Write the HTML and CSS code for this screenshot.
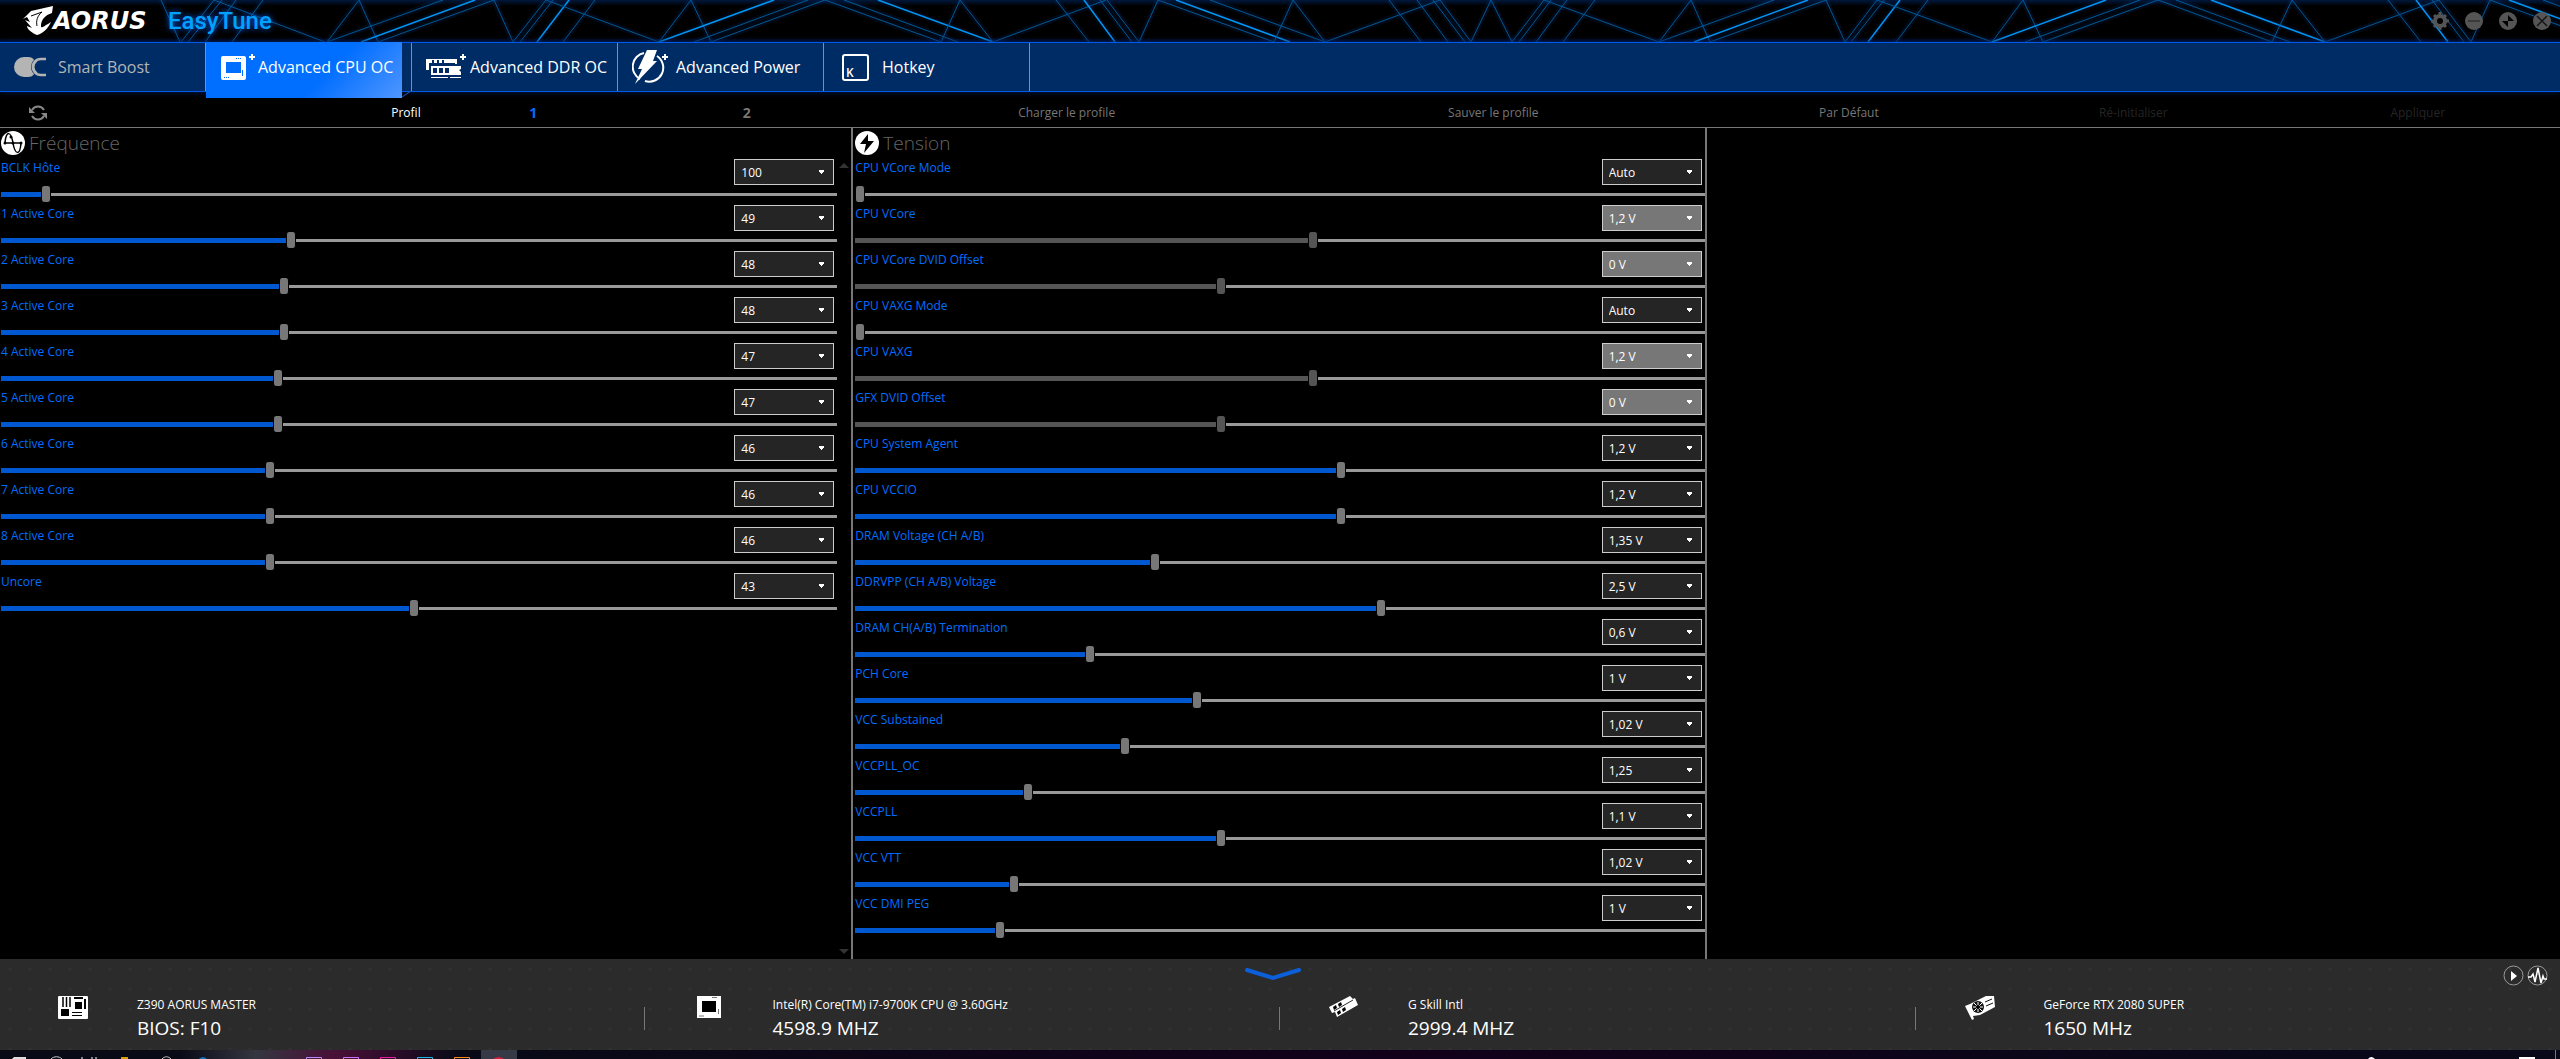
FILE: index.html
```html
<!DOCTYPE html>
<html lang="fr">
<head>
  <meta charset="UTF-8">
  <title>EasyTune</title>
  <link rel="stylesheet" href="styles.css">
</head>
<body>
  <header class="titlebar">
    <svg class="titlebar-lines" id="lines" aria-hidden="true"></svg>
    <div class="brand">
      <svg class="brand-logo" viewBox="0 0 30 30" aria-hidden="true">
        <path d="M0 13 L8 5 L30 0 L29 7 C22 9 18 14 18 20 C18 23 21 20 25 18 L28 16 C25 23 19 28 14 29 C9 27 4 23 4 20 L9 22 L2 14 L7 16 L4 11 Z" fill="#fff"/>
        <path d="M8 10 L19 6 C14 10 13 15 14 20" fill="none" stroke="#000" stroke-width="1"/>
      </svg>
      <span class="brand-name">AORUS</span>
      <h1 class="app-name">EasyTune</h1>
    </div>
    <div class="window-buttons">
      <button aria-label="Paramètres">
        <svg viewBox="0 0 18 18"><circle cx="9" cy="9" r="5" fill="none" stroke="#555" stroke-width="4"/><path d="M9 0v18M0 9h18M3 3l12 12M15 3L3 15" stroke="#555" stroke-width="3"/><circle cx="9" cy="9" r="3" fill="#000"/></svg>
      </button>
      <button aria-label="Réduire">
        <svg viewBox="0 0 18 18"><circle cx="9" cy="9" r="9" fill="#555"/><path d="M3 9h12" stroke="#3a3a3a" stroke-width="2"/></svg>
      </button>
      <button aria-label="Agrandir">
        <svg viewBox="0 0 18 18"><circle cx="9" cy="9" r="9" fill="#555"/><path d="M9 3v6h6zM9 15V9H3z" fill="#000"/></svg>
      </button>
      <button aria-label="Fermer">
        <svg viewBox="0 0 18 18"><circle cx="9" cy="9" r="9" fill="#555"/><path d="M4 4l10 10M14 4L4 14" stroke="#151515" stroke-width="1.5"/></svg>
      </button>
    </div>
  </header>

  <nav class="tabs">
    <div class="tab-cell">
      <button class="tab muted">
        <svg width="33" height="20" viewBox="0 0 33 20"><path d="M10 0h4c3 0 5 1 6 3-4 4-4 10 0 14-1 2-3 3-6 3h-4a10 10 0 0 1 0-20z" fill="#b4b4b4"/><path d="M32 2h-5c-11 0-11 16 0 16h5M23 3c-5 4-5 10 0 14" fill="none" stroke="#b4b4b4" stroke-width="2.5"/></svg>
        Smart Boost
      </button>
    </div>
    <div class="tab-cell">
      <button class="tab active">
        <svg width="34" height="30" viewBox="0 0 34 30"><rect y="4" width="25" height="24" rx="2" fill="#fff"/><rect x="5" y="10" width="15" height="11" fill="#006eff"/><path d="M15 6.500h6M3 25.500h6" stroke="#006eff" stroke-width="1" stroke-dasharray="1 1"/><path d="M21.500 18v6" stroke="#006eff"/><path d="M31 2v6M28 5h6" stroke="#fff" stroke-width="2"/></svg>
        Advanced CPU OC
      </button>
      <svg class="tab-corner" width="9" height="6" viewBox="0 0 9 6"><path d="M0 6L9 0" stroke="#1e5ab4"/></svg>
    </div>
    <div class="tab-cell">
      <button class="tab">
        <svg width="41" height="30" viewBox="0 0 41 30"><path d="M0 7h31v5h-2v-1H3v7H0z" fill="#fff"/><path d="M7 8v3M12 8v3M17 8v3" stroke="#002c66" stroke-width="2"/><path d="M5 14h30v3l-2 1 2 2v3H5z" fill="#fff"/><path d="M7 16h4v5H7zM13 16h4v5h-4zM19 16h4v5h-4z" fill="#002c66"/><path d="M5 25.500h17M24 25.500h11" stroke="#fff" stroke-width="1"/><path d="M37 2v6M34 5h6" stroke="#fff" stroke-width="2"/></svg>
        Advanced DDR OC
      </button>
    </div>
    <div class="tab-cell">
      <button class="tab">
        <svg width="37" height="34" viewBox="0 0 37 34"><path d="M12 3a14 14 0 0 0-4 26M25 6a14 14 0 0 1-12 25" fill="none" stroke="#fff" stroke-width="2"/><path d="M15 0h10l-4 11h4L3 34l7-15H6z" fill="#fff"/><path d="M33 4v6M30 7h6" stroke="#fff" stroke-width="2"/></svg>
        Advanced Power
      </button>
    </div>
    <div class="tab-cell">
      <button class="tab hotkey">
        <svg width="28" height="28" viewBox="0 0 28 28"><rect x="1" y="2" width="25" height="25" rx="2" fill="none" stroke="#fff" stroke-width="2"/><text x="4" y="24" fill="#fff" font-size="12" font-weight="600">K</text></svg>
        Hotkey
      </button>
    </div>
  </nav>

  <div class="toolbar">
    <div class="profile">
      <button class="tool" aria-label="Actualiser">
        <svg width="18" height="18" viewBox="0 0 18 18"><path d="M3 6a7 7 0 0 1 12 0M15 12a7 7 0 0 1-12 0" fill="none" stroke="#888" stroke-width="2"/><path d="M0 3v6h6zM18 15V9h-6z" fill="#888"/></svg>
      </button>
      <span class="profile-label">Profil</span>
    </div>
    <button class="tool number selected">1</button>
    <button class="tool number">2</button>
    <button class="tool">Charger le profile</button>
    <button class="tool">Sauver le profile</button>
    <button class="tool">Par Défaut</button>
    <button class="tool" disabled>Ré-initialiser</button>
    <button class="tool" disabled>Appliquer</button>
  </div>

  <main class="panels">
    <section class="panel scrollable">
      <h2 class="panel-title">
        <svg width="24" height="24" viewBox="0 0 24 24"><circle cx="12" cy="12" r="12" fill="#fff"/><path d="M3 12h18M4 12C5-1 10 0 12 12s7 13 8 0" fill="none" stroke="#000" stroke-width="1.500"/><circle cx="4" cy="12" r="1.500"/><circle cx="12" cy="12" r="1.500"/><circle cx="20" cy="12" r="1.500"/><circle cx="10" cy="6" r="1.500"/></svg>
        Fréquence
      </h2>
      <div id="frequency"></div>
      <span class="scroll-arrow up"></span>
      <span class="scroll-arrow down"></span>
    </section>
    <section class="panel">
      <h2 class="panel-title">
        <svg width="24" height="24" viewBox="0 0 24 24"><circle cx="12" cy="12" r="12" fill="#fff"/><path d="M13 3L5 13h6l-2 9 10-12h-6z"/></svg>
        Tension
      </h2>
      <div id="voltage"></div>
    </section>
    <section class="panel"></section>
  </main>

  <footer class="status">
    <button class="collapse" aria-label="Masquer">
      <svg width="58" height="14" viewBox="0 0 58 14"><path d="M3 3l26 8 26-8" fill="none" stroke="#0b5fd8" stroke-width="4" stroke-linecap="round"/></svg>
    </button>
    <div class="monitor-buttons">
      <button aria-label="Lecture">
        <svg width="21" height="21" viewBox="0 0 21 21"><circle cx="10.500" cy="10.500" r="9.500" fill="none" stroke="#999"/><path d="M8 6l6 5-6 5z" fill="#fff"/></svg>
      </button>
      <button aria-label="Moniteur">
        <svg width="21" height="21" viewBox="0 0 21 21"><circle cx="10.500" cy="10.500" r="9.500" fill="none" stroke="#999"/><path d="M1 12h3l2-3 2 8 3-14 3 15 2-7 1 3h3" fill="none" stroke="#fff" stroke-width="1.500"/></svg>
      </button>
    </div>
    <div class="device">
      <svg class="device-icon" width="32" height="32" viewBox="0 0 32 32"><rect x="1" y="1" width="30" height="23" rx="1" fill="#fff"/><path d="M6 2v10M9.500 2v10M13 2v10" stroke="#000" stroke-width="1.500"/><path d="M4 14h8v7H4zM18 7h7v7h-7zM27 4h2v10h-2zM17 2h9v2h-9z"/><path d="M15 17.500h10M15 20.500h10" stroke="#000"/></svg>
      <div class="device-text">
        <span class="device-name">Z390 AORUS MASTER</span>
        <span class="device-value">BIOS: F10</span>
      </div>
    </div>
    <div class="device">
      <svg class="device-icon" width="32" height="32" viewBox="0 0 32 32"><rect x="4" y="1" width="24" height="22" fill="#fff"/><rect x="9" y="6" width="14" height="11"/><path d="M19 2.500h5M6 21h5M25.500 14v5" stroke="#777"/></svg>
      <div class="device-text">
        <span class="device-name">Intel(R) Core(TM) i7-9700K CPU @ 3.60GHz</span>
        <span class="device-value">4598.9 MHZ</span>
      </div>
    </div>
    <div class="device">
      <svg class="device-icon" width="32" height="32" viewBox="0 0 32 32"><path d="M1 12L22 1l3 3 2-1 3 7-21 12-2-5-3 1z" fill="#fff"/><path d="M5 12l3-2 1 3-3 2zM10 9l3-2 1 3-3 2zM9 17l3-2 1 3-3 2zM14 14l3-2 1 3-3 2z"/><path d="M6 16L25 5" stroke="#2b2b2b"/></svg>
      <div class="device-text">
        <span class="device-name">G Skill Intl</span>
        <span class="device-value">2999.4 MHZ</span>
      </div>
    </div>
    <div class="device">
      <svg class="device-icon" width="32" height="32" viewBox="0 0 32 32"><path d="M1 11l5-2L22 1h8l1 11-15 8-7 1 1 3-2 1z" fill="#fff"/><circle cx="14" cy="12" r="6" fill="#111"/><path d="M14 7v10M9 12h10M10 8l8 8M18 8l-8 8" stroke="#fff" stroke-width="1"/><circle cx="14" cy="12" r="2"/><path d="M21 7l7-3M22 11l7-3" stroke="#111"/></svg>
      <div class="device-text">
        <span class="device-name">GeForce RTX 2080 SUPER</span>
        <span class="device-value">1650 MHz</span>
      </div>
    </div>
  </footer>

  <div class="taskbar" aria-hidden="true">
    <svg width="520" height="9">
      <rect x="481" width="36" height="9" fill="#363a46"/>
      <path d="M12 9l2-2h12v2z" fill="#ddd"/>
      <path d="M51 9c3-3 8-3 11 0M162 9c3-3 6-3 9 0" fill="none" stroke="#ccc" stroke-width="1"/>
      <path d="M82 7v2M92 7v2M96 7v2" stroke="#fff" stroke-width="1"/>
      <rect x="121" y="7" width="7" height="2" fill="#d8a000"/>
      <path d="M199 9q4-4 8 0z" fill="#0f6fc0"/>
      <g fill="none" stroke-width="1">
        <path d="M306.500 9V7.500h15V9" stroke="#b48cff"/>
        <path d="M343.500 9V7.500h15V9" stroke="#d070ff"/>
        <path d="M380.500 9V7.500h15V9" stroke="#e81ea0"/>
        <path d="M417.500 9V7.500h15V9" stroke="#20b8e8"/>
        <path d="M454.500 9V7.500h15V9" stroke="#ff8a18"/>
      </g>
      <path d="M493 9q6-4 11 0z" fill="#d0203c"/>
    </svg>
    <svg width="200" height="9">
      <path d="M8 9q3-4 7 0z" fill="#fff"/>
      <rect x="159" y="7" width="16" height="2" fill="#fff"/>
      <rect x="195" width="1" height="9" fill="#777"/>
    </svg>
  </div>

  <script>
    // label, value, thumb position in percent, disabled
    const frequency = [
      ["BCLK Hôte", "100", 4.8],
      ["1 Active Core", "49", 34.5],
      ["2 Active Core", "48", 33.7],
      ["3 Active Core", "48", 33.7],
      ["4 Active Core", "47", 32.9],
      ["5 Active Core", "47", 32.9],
      ["6 Active Core", "46", 32],
      ["7 Active Core", "46", 32],
      ["8 Active Core", "46", 32],
      ["Uncore", "43", 49.4]
    ];

    const voltage = [
      ["CPU VCore Mode", "Auto", 0],
      ["CPU VCore", "1,2 V", 53.9, true],
      ["CPU VCore DVID Offset", "0 V", 43, true],
      ["CPU VAXG Mode", "Auto", 0],
      ["CPU VAXG", "1,2 V", 53.9, true],
      ["GFX DVID Offset", "0 V", 43, true],
      ["CPU System Agent", "1,2 V", 57.3],
      ["CPU VCCIO", "1,2 V", 57.3],
      ["DRAM Voltage (CH A/B)", "1,35 V", 35.1],
      ["DDRVPP (CH A/B) Voltage", "2,5 V", 62],
      ["DRAM CH(A/B) Termination", "0,6 V", 27.4],
      ["PCH Core", "1 V", 40.1],
      ["VCC Substained", "1,02 V", 31.5],
      ["VCCPLL_OC", "1,25", 20],
      ["VCCPLL", "1,1 V", 43],
      ["VCC VTT", "1,02 V", 18.3],
      ["VCC DMI PEG", "1 V", 16.7]
    ];

    function renderRows(id, rows) {
      document.getElementById(id).innerHTML = rows.map(([label, value, pos, off], i) => `
        <div class="row">
          <label class="row-label" for="${id}-${i}">${label}</label>
          <select class="row-select" id="${id}-${i}" ${off ? "disabled" : ""}><option>${value}</option></select>
          <input class="slider" type="range" min="0" max="100" step="0.1" value="${pos}"
            aria-label="${label}" style="--pos: ${pos}%" ${off ? "disabled" : ""}>
        </div>`).join("");

      document.querySelectorAll(`#${id} .slider`).forEach(slider => {
        slider.addEventListener("input", () => slider.style.setProperty("--pos", slider.value + "%"));
      });
    }

    // x at the top edge, x at the bottom edge, bright
    const lines = [
      [161, 180], [214, 181], [222, 188], [236, 205], [263, 232], [214, 325], [359, 327], [359, 378],
      [443, 327], [475, 361, 1], [494, 378], [494, 513], [546, 513], [553, 520], [569, 537, 1], [595, 563],
      [546, 659], [691, 659], [691, 711], [774, 659, 1], [808, 694], [825, 711], [825, 941], [844, 958],
      [878, 993, 1], [960, 941], [960, 993], [1106, 993], [1056, 1089], [1084, 1115, 1], [1100, 1132],
      [1107, 1139], [1158, 1139], [1158, 1274], [1176, 1290, 1], [1210, 1325], [1293, 1274], [1293, 1325],
      [1440, 1325], [1389, 1421], [1417, 1448], [1433, 1465], [1440, 1471], [1491, 1471], [1491, 1512],
      [1544, 1512], [1551, 1519], [1567, 1536], [1595, 1563], [1544, 1659], [1691, 1659], [1691, 1710],
      [1774, 1659], [1808, 1694, 1], [1826, 1710], [1826, 1845], [1877, 1845], [1884, 1851], [1900, 1868, 1],
      [1928, 1896], [1877, 1992], [2023, 1992], [2023, 2043], [2106, 1992, 1], [2140, 2025], [2158, 2043],
      [2158, 2272], [2176, 2290], [2211, 2325, 1], [2292, 2272], [2292, 2325], [2439, 2325], [2388, 2421],
      [2416, 2448, 1], [2432, 2464], [2439, 2471], [2490, 2471], [2490, 2605], [2509, 2623, 1], [2543, 2657]
    ];

    document.getElementById("lines").innerHTML = lines.map(([top, bottom, bright]) =>
      `<line class="glow" x1="${top}" y1="0" x2="${bottom}" y2="42"/>
       <line class="${bright ? "bright" : "thin"}" x1="${top}" y1="0" x2="${bottom}" y2="42"/>`).join("");

    renderRows("frequency", frequency);
    renderRows("voltage", voltage);
  </script>
</body>
</html>
```
FILE: styles.css
```css
* {
  box-sizing: border-box;
}

body {
  margin: 0;
  min-height: 100vh;
  display: flex;
  flex-direction: column;
  background: #000;
  color: #fff;
  font-family: "Open Sans", "Noto Sans", sans-serif;
  font-size: 12px;
  overflow-x: hidden;
}

button {
  padding: 0;
  border: none;
  background: none;
  color: inherit;
  font: inherit;
  cursor: pointer;
}

svg {
  display: block;
  flex: none;
}

/* title bar */
.titlebar {
  position: relative;
  display: flex;
  justify-content: space-between;
  align-items: center;
  height: 42px;
  background: linear-gradient(#00183c, #000 6px, #000 38px, #001030);
}

.titlebar-lines {
  position: absolute;
  inset: 0;
  width: 100%;
  height: 100%;
}

.titlebar-lines .thin {
  stroke: #005a96;
}

.titlebar-lines .bright {
  stroke: #0096f5;
  stroke-width: 1.5;
}

.titlebar-lines .glow {
  stroke: #003c8c;
  stroke-opacity: 0.15;
  stroke-width: 6;
}

.brand {
  position: relative;
  display: flex;
  align-items: center;
  padding-left: 23px;
}

.brand-logo {
  width: 30px;
  height: 30px;
}

.brand-name {
  width: 115px;
  font-family: "DejaVu Sans", sans-serif;
  font-size: 24px;
  font-weight: 700;
  font-style: italic;
  line-height: 30px;
}

.app-name {
  margin: 0;
  color: #00a2ff;
  font-family: Roboto, sans-serif;
  font-size: 24px;
  font-weight: 500;
  line-height: 30px;
  text-shadow: 0 0 6px #0064ff;
}

.window-buttons {
  position: relative;
  display: flex;
  gap: 16px;
  padding-right: 9px;
}

.window-buttons svg {
  width: 18px;
  height: 18px;
}

/* tabs */
.tabs {
  position: relative;
  display: flex;
  height: 50px;
  background: #002c66;
  border-top: 1px solid #005aeb;
  border-bottom: 1px solid #005aeb;
  box-shadow: 0 0 6px #001e5a;
}

.tab-cell {
  position: relative;
  width: 206px;
  border-right: 1px solid #5096ff;
}

.tab {
  display: grid;
  grid-template-columns: 44px auto;
  justify-content: start;
  justify-items: start;
  align-items: center;
  width: 100%;
  height: 48px;
  padding-left: 14px;
  font-size: 16px;
  white-space: nowrap;
}

.tab.muted {
  color: #b4b4b4;
}

.tab.hotkey {
  grid-template-columns: 40px auto;
  padding-left: 18px;
}

/* the open tab hangs over the bar's lower edge */
.tab.active {
  position: absolute;
  top: -1px;
  left: 0;
  grid-template-columns: 37px auto;
  width: 196px;
  height: 56px;
  padding: 0 0 6px 15px;
  background: linear-gradient(135deg, #006eff 60%, #5096ff);
}

.tab-corner {
  position: absolute;
  right: 0;
  bottom: -6px;
}

/* toolbar */
.toolbar {
  display: grid;
  grid-template-columns: 6fr 3fr 3fr 6fr 6fr 4fr 4fr 4fr;
  height: 36px;
  padding-top: 6px;
  border-bottom: 1px solid #777;
}

.profile {
  display: flex;
  justify-content: space-between;
  align-items: center;
  padding: 0 6px 0 29px;
}

.tool {
  color: #777;
  font-weight: 500;
}

.tool.number {
  font-size: 14px;
  font-weight: 700;
}

.tool.selected {
  color: #006eff;
}

.tool:disabled {
  color: #252525;
}

/* panels */
.panels {
  flex: 1;
  display: grid;
  grid-template-columns: repeat(3, 1fr);
}

.panel {
  position: relative;
  padding-left: 2px;
}

.panel:not(:last-child) {
  border-right: 2px solid #777;
}

.panel.scrollable {
  padding: 0 14px 0 1px;
}

.panel-title {
  display: flex;
  align-items: center;
  gap: 4px;
  height: 29px;
  margin: 0;
  color: #666;
  font-size: 19px;
  font-weight: 300;
}

.row {
  display: grid;
  grid-template-columns: 1fr 100px;
  grid-template-rows: 29px 17px;
  padding-right: 3px;
}

.row-label {
  color: #006eff;
  line-height: 22px;
}

.row-select {
  appearance: none;
  height: 26px;
  margin-top: 2px;
  padding: 0 6px;
  border: 1px solid #ccc;
  border-radius: 0;
  background: #252525 conic-gradient(from -40deg at 50% 100%, #fff 80deg, transparent 0) 83px 10px / 7px 4px no-repeat;
  color: #fff;
  font: inherit;
  opacity: 1;
}

.row-select:disabled {
  background-color: #777;
}

.slider {
  --fill: #0058d0;
  appearance: none;
  grid-column: 1 / -1;
  height: 16px;
  margin: 0 -3px 0 0;
  background:
    linear-gradient(var(--fill), var(--fill)) 0 6px / var(--pos) 5px no-repeat,
    linear-gradient(#999, #999) 0 7px / 100% 3px no-repeat;
}

.slider:disabled {
  --fill: #555;
}

.slider::-webkit-slider-thumb {
  appearance: none;
  width: 10px;
  height: 16px;
  border: 1px solid #000;
  border-width: 0 1px;
  border-radius: 3px;
  background: #777;
}

.slider:disabled::-webkit-slider-thumb {
  background: #555;
}

.scroll-arrow {
  position: absolute;
  right: 2px;
  border: 5px solid transparent;
}

.scroll-arrow.up {
  top: 30px;
  border-bottom-color: #333;
}

.scroll-arrow.down {
  bottom: 0;
  border-top-color: #333;
}

/* hardware status */
.status {
  position: relative;
  display: grid;
  grid-template-columns: repeat(4, 1fr);
  height: 91px;
  padding: 36px 9px 0;
  background:
    radial-gradient(circle at 10px 10px, #323232 0 1px, transparent 2px) 0 0 / 20px 20px,
    #2b2b2b;
}

.device {
  display: flex;
  padding-left: 48px;
  background: linear-gradient(#777, #777) 100% 12px / 1px 23px no-repeat;
}

.device:last-child {
  background: none;
}

.device-icon {
  margin-right: 48px;
}

.device-text {
  display: flex;
  flex-direction: column;
}

.device-name {
  line-height: 20px;
}

.device-value {
  font-size: 19px;
  line-height: 26px;
}

.collapse {
  position: absolute;
  top: 8px;
  left: 50%;
  margin-left: -36px;
}

.monitor-buttons {
  position: absolute;
  top: 6px;
  right: 12px;
  display: flex;
  gap: 3px;
}

/* desktop taskbar edge */
.taskbar {
  display: flex;
  justify-content: space-between;
  height: 9px;
  background: linear-gradient(90deg, #080a16 7%, #343640 10%, #4a1038 13%, #080a16 18%, #12001a 55%, #080818 90%);
}
```
